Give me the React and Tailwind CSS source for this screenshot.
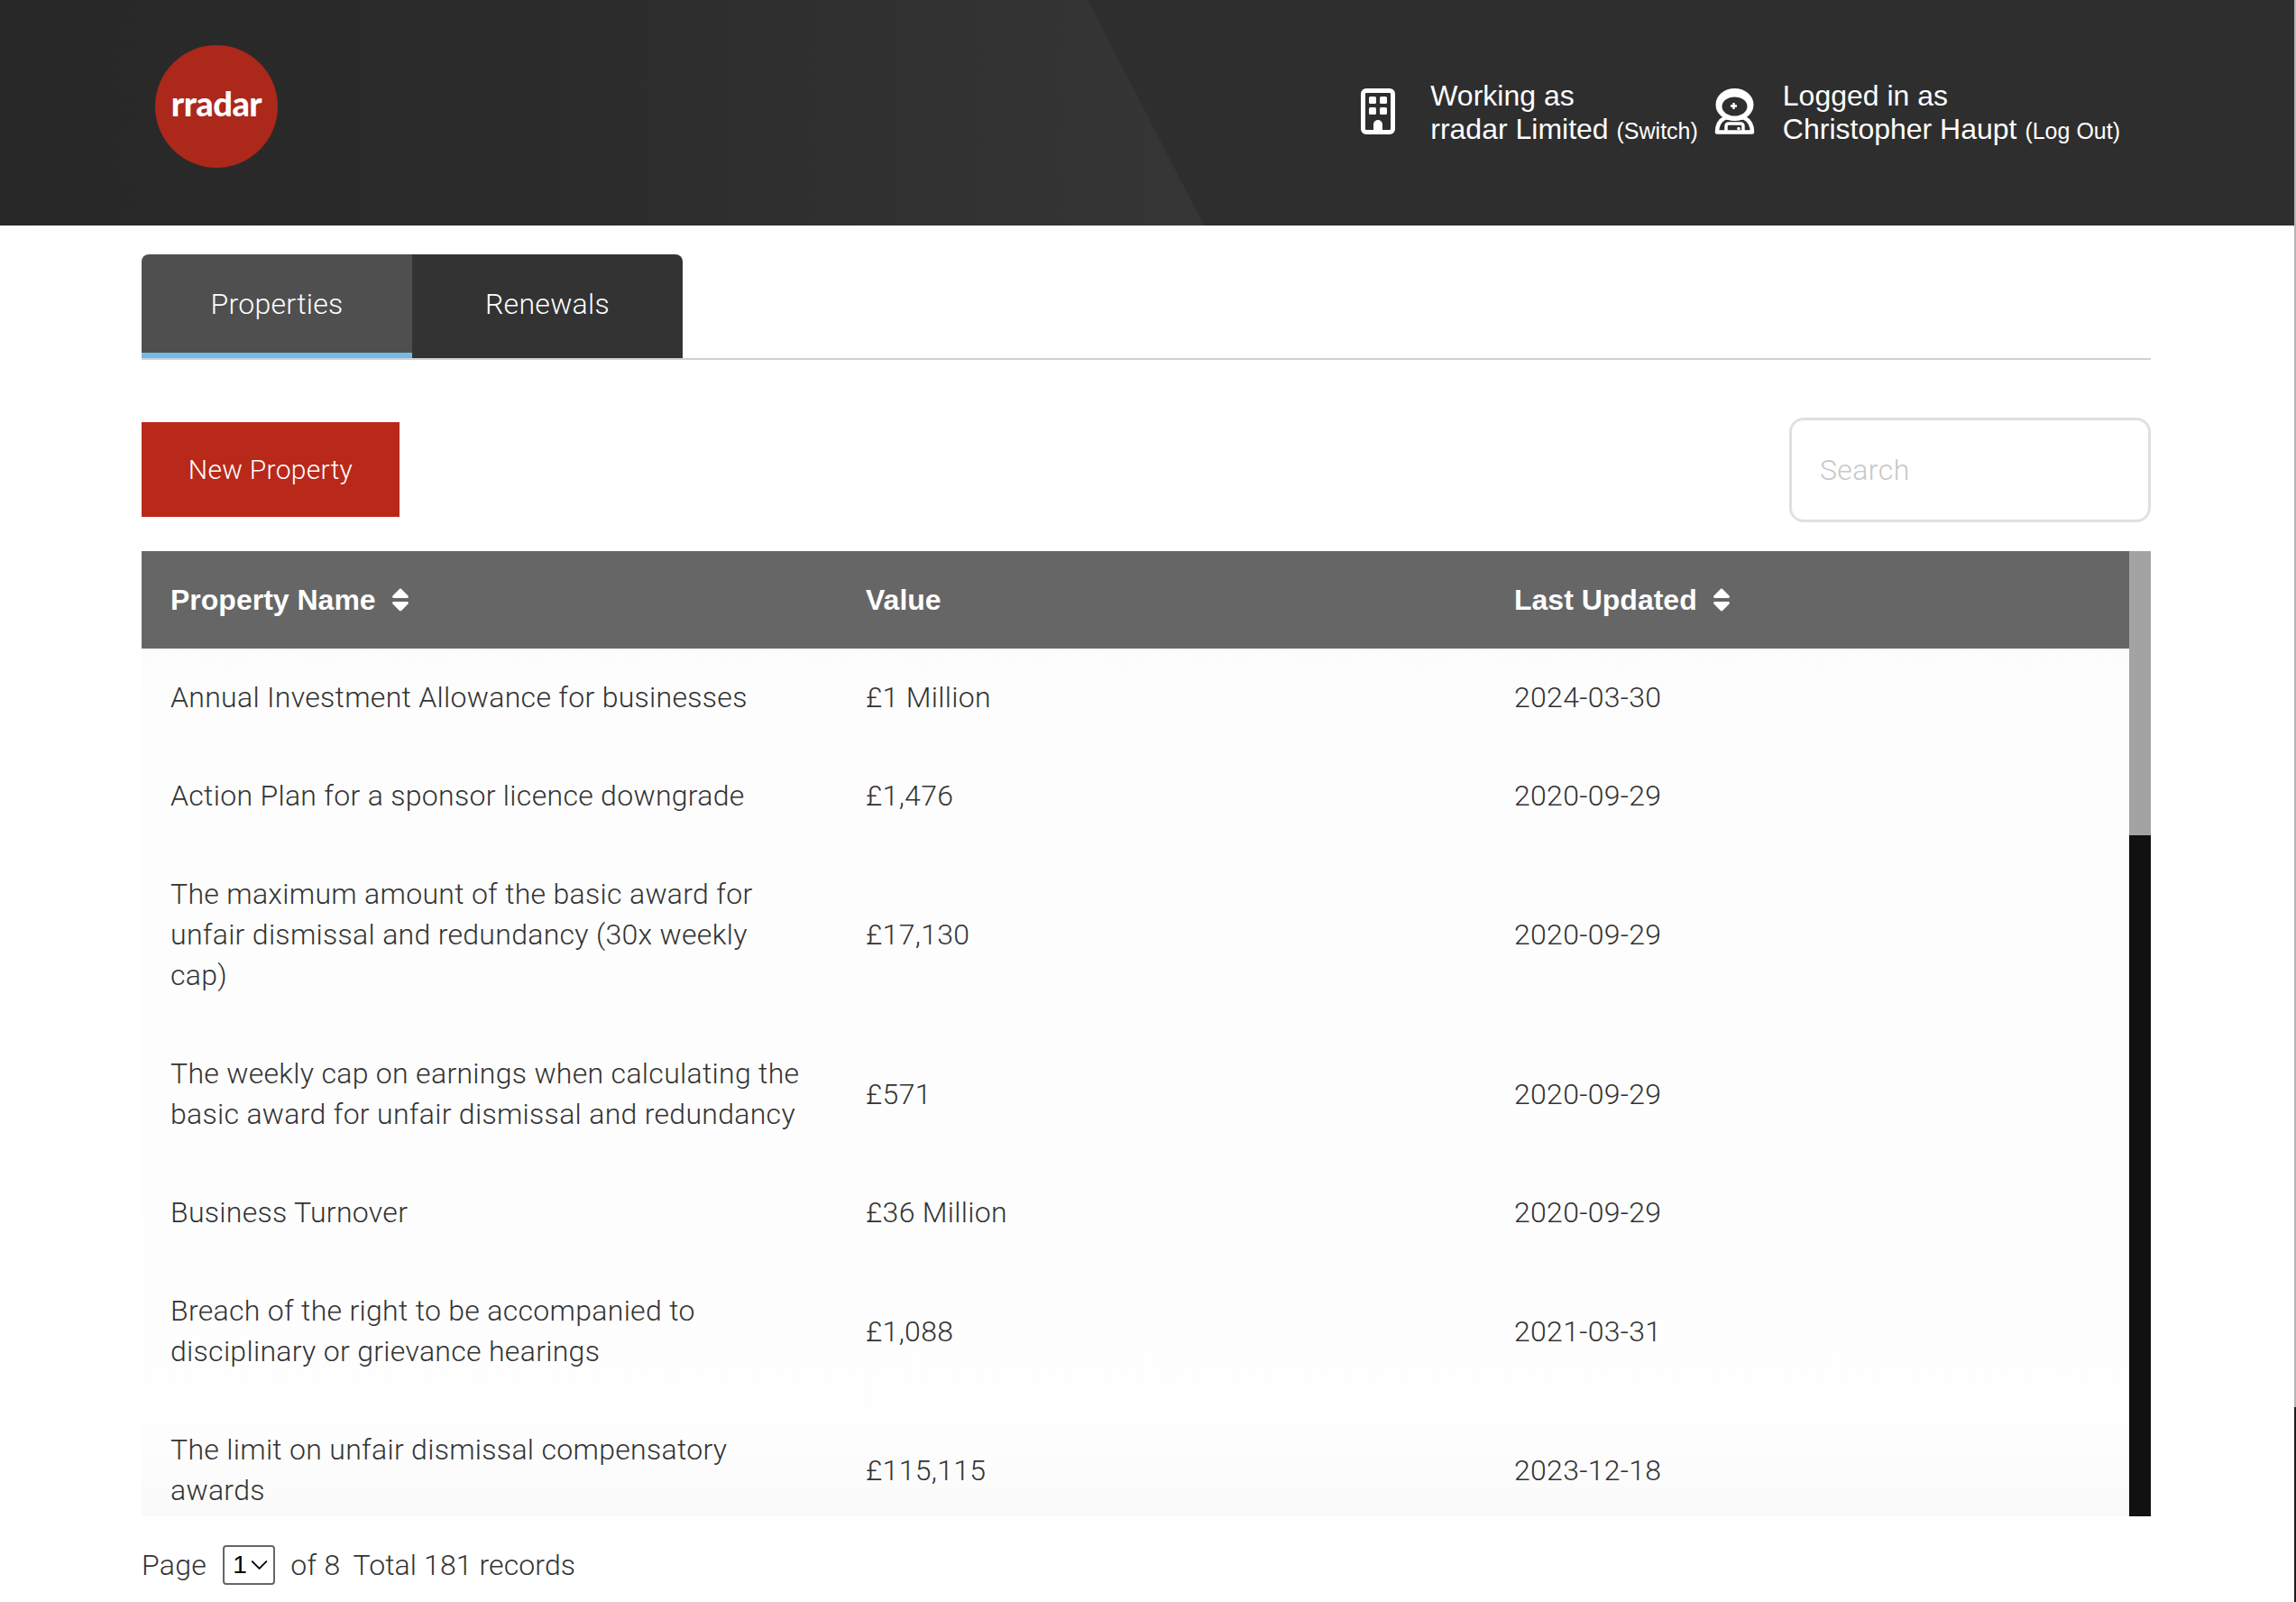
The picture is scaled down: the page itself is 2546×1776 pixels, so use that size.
import React from "react";
import { ChevronDown } from "lucide-react";
import { FaSort } from "react-icons/fa";

const rows = [
  { name: "Annual Investment Allowance for businesses", value: "£1 Million", updated: "2024-03-30" },
  { name: "Action Plan for a sponsor licence downgrade", value: "£1,476", updated: "2020-09-29" },
  { name: "The maximum amount of the basic award for unfair dismissal and redundancy (30x weekly cap)", value: "£17,130", updated: "2020-09-29" },
  { name: "The weekly cap on earnings when calculating the basic award for unfair dismissal and redundancy", value: "£571", updated: "2020-09-29" },
  { name: "Business Turnover", value: "£36 Million", updated: "2020-09-29" },
  { name: "Breach of the right to be accompanied to disciplinary or grievance hearings", value: "£1,088", updated: "2021-03-31" },
  { name: "The limit on unfair dismissal compensatory awards", value: "£115,115", updated: "2023-12-18" },
];

const BuildingIcon = () => (
  <svg width="38" height="51" viewBox="0 0 38 51" fill="none" className="mb-[6px] shrink-0">
    <rect x="2.5" y="2.5" width="33" height="46" rx="3.5" stroke="white" strokeWidth="5" />
    <rect x="9" y="9" width="8" height="8" rx="1.5" fill="white" />
    <rect x="21" y="9" width="8" height="8" rx="1.5" fill="white" />
    <rect x="9" y="21" width="8" height="8" rx="1.5" fill="white" />
    <rect x="21" y="21" width="8" height="8" rx="1.5" fill="white" />
    <path d="M14 48V40a5 5 0 0 1 10 0v8z" fill="white" />
  </svg>
);

const AstronautIcon = () => (
  <svg width="45" height="51" viewBox="0 0 45 51" fill="none" className="mb-[6px] shrink-0">
    <path d="M3 48.500c0-8 3-13 9-16h21c6 3 9 8 9 16z" stroke="white" strokeWidth="4.500" strokeLinejoin="round" />
    <path d="M13 48v-6q0-3 3-3h13q3 0 3 3v6" stroke="white" strokeWidth="3.500" />
    <ellipse cx="22.500" cy="18" rx="21" ry="18" fill="white" />
    <ellipse cx="22.500" cy="20" rx="14" ry="10.500" fill="#2e2e2e" />
    <path d="M21.500 16v7M18 19.500h7" stroke="white" strokeWidth="2.400" />
    <circle cx="27" cy="44.500" r="1.800" fill="white" />
  </svg>
);

const HeaderInfo = ({ label, name, action }) => (
  <div className="text-[32px] leading-[37px] text-white">
    <div>{label}</div>
    <div className="whitespace-nowrap">
      {name} <span className="text-[25px]">({action})</span>
    </div>
  </div>
);

const App = () => {
  return (
    <div className="relative h-[1776px] w-full overflow-hidden bg-white font-['Liberation_Sans',Arial,sans-serif] text-[#333]">
      {/* HEADER */}
      <header className="relative h-[250px] bg-[#2e2e2e]">
        <div className="absolute inset-0 bg-[linear-gradient(90deg,#282828_0,#2b2b2b_600px,#363636_1335px)] [clip-path:polygon(0_0,1206px_0,1335px_100%,0_100%)]" />
        <div className="relative flex h-full items-start justify-between pl-[172px] pr-[195px]">
          <div className="mt-[50px] flex h-[136px] w-[136px] items-center justify-center rounded-full bg-[#ab281b] pb-[8px]">
            <span className="font-['Lato',sans-serif] text-[38px] font-black leading-none tracking-[-0.5px] text-white">rradar</span>
          </div>
          <div className="mt-[88px] flex gap-[18px]">
            <div className="flex items-center gap-[39px]">
              <BuildingIcon />
              <HeaderInfo label="Working as" name="rradar Limited" action="Switch" />
            </div>
            <div className="flex items-center gap-[31px]">
              <AstronautIcon />
              <HeaderInfo label="Logged in as" name="Christopher Haupt" action="Log Out" />
            </div>
          </div>
        </div>
      </header>

      <main className="px-[157px] pr-[161px]">
        {/* TABS */}
        <div className="mt-[32px] flex h-[117px] items-start border-b-2 border-[#d0d0d0]">
          <div className="flex h-[115px] overflow-hidden rounded-t-[8px] font-['Roboto',sans-serif] text-[32px] font-light tracking-[0.3px] text-white">
            <div className="flex w-[300px] items-center justify-center bg-[#4f4f4f] pb-[6px] shadow-[inset_0_-6px_0_#72bbe6]">Properties</div>
            <div className="flex w-[300px] items-center justify-center bg-[#333] pb-[6px]">Renewals</div>
          </div>
        </div>

        {/* TOOLBAR */}
        <div className="mt-[64px] flex items-center justify-between">
          <button className="mb-[1px] h-[105px] w-[286px] bg-[#b8291a] font-['Roboto',sans-serif] text-[30px] font-light tracking-[0.3px] text-white">New Property</button>
          <div className="flex h-[116px] w-[401px] items-center rounded-[16px] border-[3px] border-[#e0e0e0] pl-[31px] font-['Roboto',sans-serif] text-[32px] font-light tracking-[0.4px] text-[#c8c8c8]">
            Search
          </div>
        </div>

        {/* TABLE */}
        <div className="mt-[32px] flex h-[1070px]">
          <div className="flex w-[2204px] flex-col overflow-hidden bg-[linear-gradient(180deg,#fcfcfc_0,#fdfdfd_20%,#fefefe_90%,#fafafa_100%)]">
            <div className="grid h-[108px] shrink-0 grid-cols-[771px_719px_714px] items-center bg-[#666] text-[32px] font-bold text-white">
              <div className="flex items-center gap-[11px] pl-[32px]">Property Name <FaSort size={32} /></div>
              <div className="pl-[32px]">Value</div>
              <div className="flex items-center gap-[11px] pl-[32px]">Last Updated <FaSort size={32} /></div>
            </div>
            {rows.map((row) => (
              <div key={row.name} className="grid shrink-0 grid-cols-[771px_719px_714px] items-center py-[32px] font-['Roboto',sans-serif] text-[32px] font-light leading-[45px] tracking-[0.3px]">
                <div className="pl-[32px] pr-[35px]">{row.name}</div>
                <div className="pl-[32px]">{row.value}</div>
                <div className="pl-[32px]">{row.updated}</div>
              </div>
            ))}
          </div>
          {/* scrollbar */}
          <div className="flex w-[24px] flex-col bg-[#111]">
            <div className="h-[315px] bg-[#a3a3a3]" />
          </div>
        </div>

        {/* PAGER */}
        <div className="mt-[32px] flex items-center font-['Roboto',sans-serif] text-[32px] font-light leading-[44px] tracking-[0.3px]">
          <span>Page</span>
          <div className="ml-[18px] flex h-[44px] w-[58px] items-center rounded-[4px] border-2 border-[#666] pl-[9px] font-['Liberation_Sans',sans-serif] text-[28px] font-normal text-black">
            1
            <ChevronDown size={32} strokeWidth={1.5} className="-ml-[2px]" />
          </div>
          <span className="ml-[17px]">of 8</span>
          <span className="ml-[14px] tracking-[0.1px]">Total 181 records</span>
        </div>
      </main>

      {/* page scrollbar */}
      <div className="absolute right-0 top-0 flex h-full w-[2px] flex-col bg-[#1e1e1e]">
        <div className="h-[1560px] bg-[#b5b5b5]" />
      </div>
    </div>
  );
};

export default App;
